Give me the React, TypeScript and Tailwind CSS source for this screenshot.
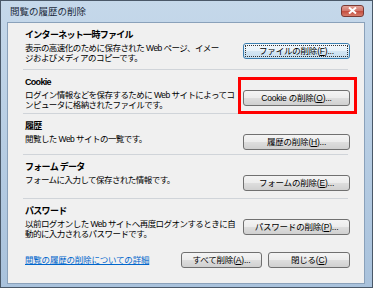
import type { ReactNode } from 'react';

function Btn({ children, focused, w = 'w-[107px]' }: { children: ReactNode; focused?: boolean; w?: string }) {
  return (
    <button
      className={`${w} h-[16px] shrink-0 rounded-[3px] border p-[1px] text-[8.5px] leading-none tracking-[-0.2px] text-black ${
        focused
          ? 'border-[#3c7fb1] bg-[linear-gradient(#f2f8fc_0%,#e7f2fa_50%,#d4e6f3_50%,#c6def0_100%)]'
          : 'border-[#707070] bg-[linear-gradient(#f4f4f4_0%,#ececec_50%,#dedede_50%,#d0d0d0_100%)]'
      }`}
    >
      <span
        className={`flex h-full w-full items-center justify-center rounded-[1px] ${
          focused ? 'border border-dotted border-[#333]' : 'border border-transparent'
        }`}
      >
        {children}
      </span>
    </button>
  );
}

function Section({
  title,
  lines,
  button,
  h,
  last,
}: {
  title: string;
  lines: string[];
  button: ReactNode;
  h: string;
  last?: boolean;
}) {
  return (
    <div className={`${h} flex shrink-0 items-start justify-between pt-[6px] ${last ? '' : 'border-b border-[#d0d4d9]'}`}>
      <div className="pl-[2px]">
        <div className="text-[9px] font-bold leading-[13px] tracking-[-0.7px] text-black">{title}</div>
        <div className="mt-[1px] text-[8.5px] leading-[10px] tracking-[-0.55px] text-black">
          {lines.map((l) => (
            <div key={l} className="whitespace-nowrap">
              {l}
            </div>
          ))}
        </div>
      </div>
      <div className="relative mt-[8px] mr-[-2px]">{button}</div>
    </div>
  );
}

export default function App() {
  return (
    <div className="flex h-[288px] w-[373px] flex-col overflow-hidden border border-[#4a5868] bg-[linear-gradient(#c5d8ea,#a9c2dc)] pb-[3px] pl-[6px] pr-[7px] font-['Liberation_Sans','Noto_Sans_CJK_JP',sans-serif]">
      {/* title bar */}
      <div className="flex h-[21px] shrink-0 items-center justify-between pl-[3px]">
        <span className="text-[9.5px] leading-none text-[#1c2b3c]">閲覧の履歴の削除</span>
        <div className="mr-[1px] mt-[-2px] flex h-[12px] w-[23px] items-center justify-center rounded-[3px] border border-[#7a3a34] bg-[linear-gradient(#e3a499_0%,#d2756a_50%,#c24a3c_50%,#d77d6c_100%)]">
          <svg width="9" height="7" viewBox="0 0 9 7">
            <path d="M1 0.5 L8 6.5 M8 0.5 L1 6.5" stroke="#fff" strokeWidth="2" />
          </svg>
        </div>
      </div>

      {/* client area */}
      <div className="flex flex-1 flex-col border border-[#8aa1ba] bg-[#f0f0f0] pl-[15px] pr-[16px]">
        <Section
          h="h-[47px]"
          title="インターネット一時ファイル"
          lines={['表示の高速化のために保存された Web ページ、イメー', 'ジおよびメディアのコピーです。']}
          button={
            <Btn focused>
              ファイルの削除(<u>F</u>)...
            </Btn>
          }
        />
        <Section
          h="h-[44px]"
          title="Cookie"
          lines={['ログイン情報などを保存するために Web サイトによってコ', 'ンピュータに格納されたファイルです。']}
          button={
            <>
              <Btn>
                Cookie の削除(<u>O</u>)...
              </Btn>
              <div className="pointer-events-none absolute -bottom-[6px] -left-[5px] -right-[7px] -top-[7px] border-[3px] border-[#ff0000]" />
            </>
          }
        />
        <Section
          h="h-[41px]"
          title="履歴"
          lines={['閲覧した Web サイトの一覧です。']}
          button={
            <Btn>
              履歴の削除(<u>H</u>)...
            </Btn>
          }
        />
        <Section
          h="h-[44px]"
          title="フォーム データ"
          lines={['フォームに入力して保存された情報です。']}
          button={
            <Btn>
              フォームの削除(<u>E</u>)...
            </Btn>
          }
        />
        <Section
          h="h-[46px]"
          last
          title="パスワード"
          lines={['以前ログオンした Web サイトへ再度ログオンするときに自', '動的に入力されるパスワードです。']}
          button={
            <Btn>
              パスワードの削除(<u>P</u>)...
            </Btn>
          }
        />
        <div className="mt-[7px] flex items-center justify-between">
          <a className="pl-[2px] text-[8.5px] leading-none tracking-[-0.2px] text-[#0066cc] underline">閲覧の履歴の削除についての詳細</a>
          <div className="mr-[-2px] flex gap-[6px]">
            <Btn w="w-[81px]">
              すべて削除(<u>A</u>)...
            </Btn>
            <Btn w="w-[82px]">
              閉じる(<u>C</u>)
            </Btn>
          </div>
        </div>
      </div>
    </div>
  );
}
